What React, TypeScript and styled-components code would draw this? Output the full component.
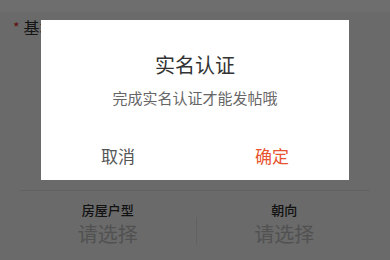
import React from "react";
import styled, { createGlobalStyle } from "styled-components";

const GlobalStyle = createGlobalStyle`
  html, body {
    margin: 0;
    padding: 0;
    background: #f6f6f6;
    font-family: "Noto Sans CJK SC", "Noto Sans", sans-serif;
  }
`;

const Page = styled.div`
  width: 390px;
  height: 260px;
  overflow: hidden;
  background: #f6f6f6;
`;

const TopStrip = styled.div`
  height: 12px;
  background: #ffffff;
`;

const SectionTitle = styled.div`
  display: flex;
  align-items: center;
  gap: 4px;
  padding: 2px 0 0 13px;
  height: 26px;
  font-size: 16px;
  color: #333;
`;

const Star = styled.span`
  color: #e0281e;
  font-size: 14px;
`;

const Spacer = styled.div`
  height: 150px;
`;

const Divider = styled.div`
  margin: 0 20px;
  height: 1px;
  background: #e4e4e4;
`;

const PickerRow = styled.div`
  display: flex;
  align-items: center;
  padding: 10px 18px 0 20px;
`;

const Picker = styled.div`
  flex: 1;
  display: flex;
  flex-direction: column;
  align-items: center;
`;

const PickerLabel = styled.div`
  font-size: 13px;
  line-height: 18px;
  font-weight: 500;
  color: #2a2a2a;
`;

const PickerValue = styled.div`
  font-size: 20px;
  line-height: 29px;
  color: #bcbcbc;
`;

const VLine = styled.div`
  width: 1px;
  height: 28px;
  margin-top: 12px;
  background: #e2e2e2;
`;

const Overlay = styled.div`
  position: fixed;
  inset: 0;
  background: rgba(0, 0, 0, 0.57);
  display: flex;
  justify-content: center;
  align-items: flex-start;
  padding-top: 20px;
`;

const Dialog = styled.div`
  width: 308px;
  height: 160px;
  background: #fff;
  display: flex;
  flex-direction: column;
  align-items: center;
`;

const Title = styled.div`
  margin-top: 32px;
  font-size: 20px;
  line-height: 26px;
  color: #333;
`;

const Message = styled.div`
  margin-top: 10px;
  font-size: 15px;
  line-height: 20px;
  color: #666;
`;

const Actions = styled.div`
  margin-top: auto;
  align-self: stretch;
  display: flex;
  height: 46px;
  padding-bottom: 2px;
`;

const Action = styled.button<{ $primary?: boolean }>`
  flex: 1;
  border: 0;
  background: none;
  padding: 0;
  font-family: inherit;
  font-size: 17px;
  color: ${(p) => (p.$primary ? "#e8542f" : "#555")};
`;

export default function App() {
  return (
    <Page>
      <GlobalStyle />
      <TopStrip />
      <SectionTitle>
        <Star>*</Star>基本信息
      </SectionTitle>
      <Spacer />
      <Divider />
      <PickerRow>
        <Picker>
          <PickerLabel>房屋户型</PickerLabel>
          <PickerValue>请选择</PickerValue>
        </Picker>
        <VLine />
        <Picker>
          <PickerLabel>朝向</PickerLabel>
          <PickerValue>请选择</PickerValue>
        </Picker>
      </PickerRow>
      <Overlay>
        <Dialog>
          <Title>实名认证</Title>
          <Message>完成实名认证才能发帖哦</Message>
          <Actions>
            <Action>取消</Action>
            <Action $primary>确定</Action>
          </Actions>
        </Dialog>
      </Overlay>
    </Page>
  );
}
